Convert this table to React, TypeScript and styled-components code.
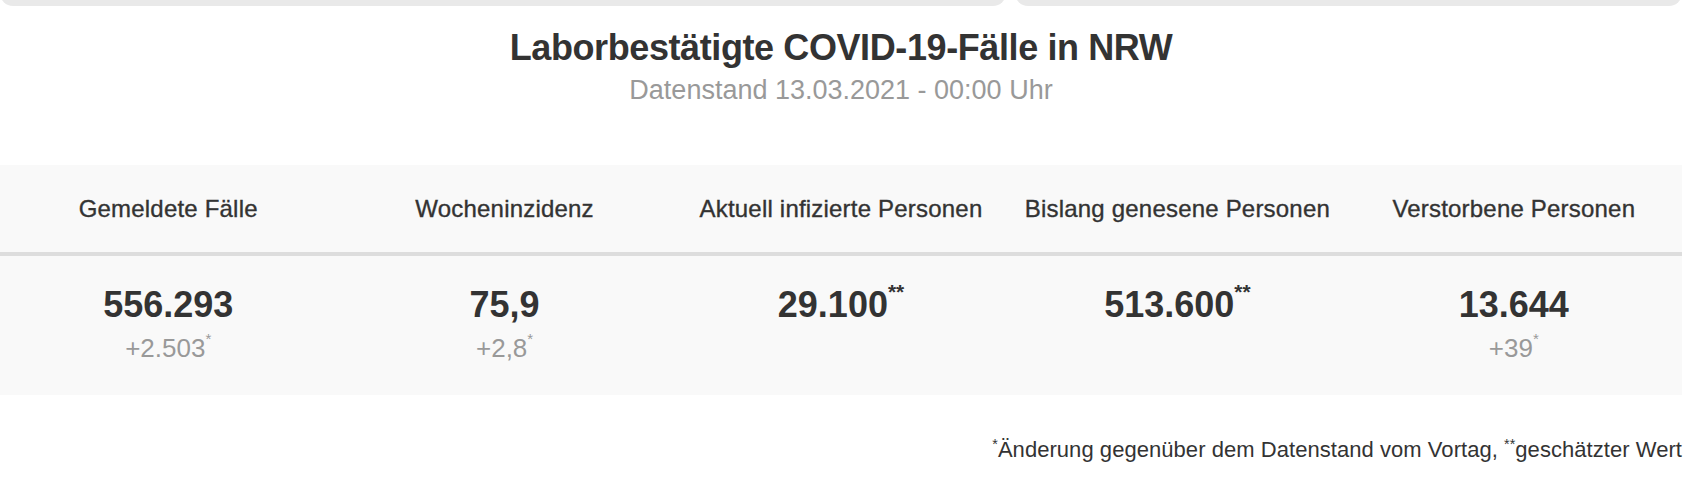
import React from "react"
import styled, { createGlobalStyle } from "styled-components"

type Stat = {
  label: string
  value: string
  valueMark?: string
  delta?: string
}

const stats: Stat[] = [
  { label: "Gemeldete Fälle", value: "556.293", delta: "+2.503" },
  { label: "Wocheninzidenz", value: "75,9", delta: "+2,8" },
  { label: "Aktuell infizierte Personen", value: "29.100", valueMark: "**" },
  { label: "Bislang genesene Personen", value: "513.600", valueMark: "**" },
  { label: "Verstorbene Personen", value: "13.644", delta: "+39" },
]

const GlobalStyle = createGlobalStyle`
  html, body {
    margin: 0;
    background: #fff;
  }
  body {
    font-family: "Liberation Sans", Arial, Helvetica, sans-serif;
    color: #333;
    overflow: hidden;
  }
`

export default function App() {
  return (
    <>
      <GlobalStyle />
      <Page>
        <TabStrip>
          <Tab $width={1006} />
          <Tab $width={667} />
        </TabStrip>

        <Heading>
          <Title>Laborbestätigte COVID-19-Fälle in NRW</Title>
          <Subtitle>Datenstand 13.03.2021 - 00:00 Uhr</Subtitle>
        </Heading>

        <Stats>
          <HeadRow>
            {stats.map((s) => (
              <HeadCell key={s.label}>{s.label}</HeadCell>
            ))}
          </HeadRow>
          <BodyRow>
            {stats.map((s) => (
              <BodyCell key={s.label}>
                <Value>
                  {s.value}
                  {s.valueMark && <Mark>{s.valueMark}</Mark>}
                </Value>
                {s.delta && (
                  <Delta>
                    {s.delta}
                    <Mark>*</Mark>
                  </Delta>
                )}
              </BodyCell>
            ))}
          </BodyRow>
        </Stats>

        <Footnote>
          <NoteMark>*</NoteMark>Änderung gegenüber dem Datenstand vom Vortag, <NoteMark>**</NoteMark>geschätzter Wert
        </Footnote>
      </Page>
    </>
  )
}

const Page = styled.div`
  width: 1682px;
`

const TabStrip = styled.div`
  display: flex;
  align-items: flex-end;
  gap: 9px;
  height: 6px;
  overflow: hidden;
`

const Tab = styled.div<{ $width: number }>`
  flex: 0 0 ${(p) => p.$width}px;
  height: 30px;
  border-radius: 13px;
  background: #e9e9e9;
`

const Heading = styled.header`
  padding-top: 21px;
  text-align: center;
`

const Title = styled.h1`
  margin: 0;
  font-size: 36px;
  line-height: 42px;
  font-weight: 700;
  letter-spacing: -0.4px;
  color: #333;
`

const Subtitle = styled.p`
  margin: 6px 0 0;
  font-size: 27px;
  line-height: 31px;
  color: #999;
`

const Stats = styled.section`
  margin-top: 59px;
  background: #f9f9f9;
`

const HeadRow = styled.div`
  display: grid;
  grid-template-columns: repeat(5, 1fr);
  align-items: center;
  height: 87px;
  border-bottom: 4px solid #dddddd;
`

const HeadCell = styled.div`
  text-align: center;
  font-size: 24px;
  line-height: 28px;
  letter-spacing: 0.2px;
  color: #333;
  -webkit-text-stroke: 0.35px #333;
`

const BodyRow = styled.div`
  display: grid;
  grid-template-columns: repeat(5, 1fr);
  padding: 29px 0 32px;
`

const BodyCell = styled.div`
  text-align: center;
`

const Value = styled.div`
  font-size: 36px;
  line-height: 40px;
  font-weight: 700;
  color: #333;
`

const Delta = styled.div`
  margin-top: 8px;
  font-size: 26px;
  line-height: 30px;
  color: #999;
`

const Mark = styled.sup`
  position: relative;
  top: -0.85em;
  vertical-align: baseline;
  font-size: 0.58em;
  line-height: 0;
`

const Footnote = styled.p`
  margin: 42px 0 0;
  font-size: 22px;
  line-height: 26px;
  letter-spacing: 0.05px;
  text-align: right;
  color: #333;
`

const NoteMark = styled.sup`
  position: relative;
  top: -0.55em;
  vertical-align: baseline;
  font-size: 0.65em;
  line-height: 0;
`
